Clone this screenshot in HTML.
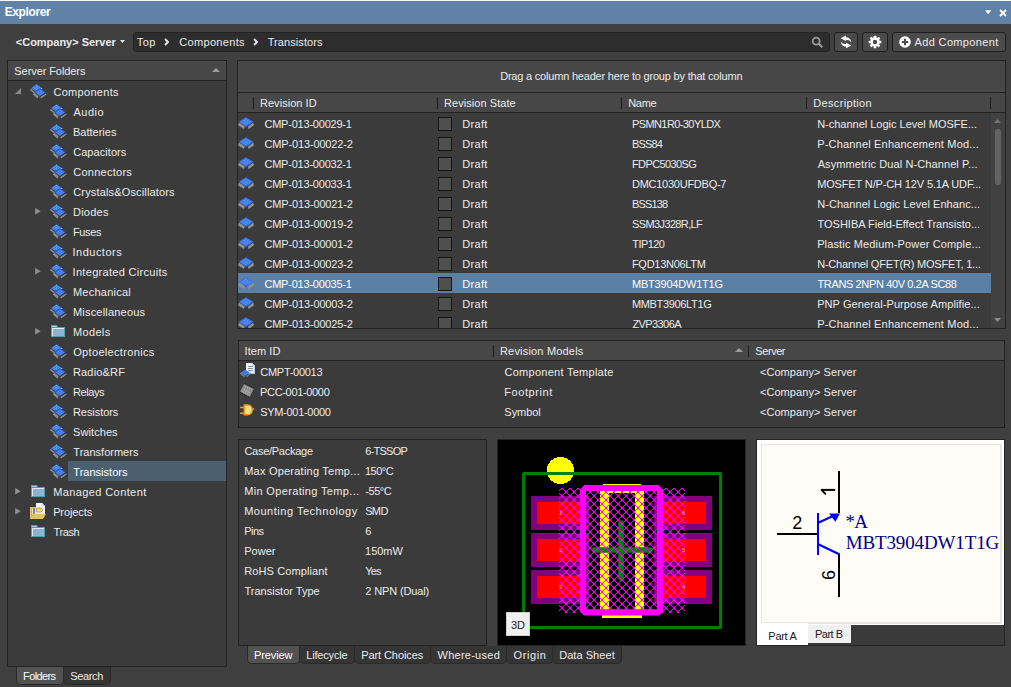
<!DOCTYPE html>
<html><head><meta charset="utf-8"><title>Explorer</title>
<style>
*{box-sizing:border-box;margin:0;padding:0}
html,body{width:1011px;height:687px;overflow:hidden;background:#3f3f3f}
body{font-family:"Liberation Sans",sans-serif;font-size:11px;color:#ebebeb;position:relative}
.abs{position:absolute}
.t{position:absolute;white-space:nowrap;line-height:14px;height:14px}
.panel{position:absolute;border:1px solid #232323;background:#3b3b3b}
.hdr{position:absolute;background:#474747;border-bottom:1px solid #232323}
.btn{position:absolute;border:1px solid #1e1e1e;border-radius:3px;background:#4b4b4b}
.sep{position:absolute;width:1px;background:#1f1f1f}
.cb{position:absolute;width:14px;height:14px;border:1px solid #151515;background:#4f4f4f}
.tab{position:absolute;border:1px solid #2a2a2a;border-top:none;border-radius:0 0 5px 5px;background:#353535}
svg{position:absolute;overflow:visible}
</style></head><body>
<div class="abs" style="left:0;top:0;width:1011px;height:24px;background:#5f82a6"></div>
<div class="t" style="left:4.73px;top:5px;letter-spacing:-0.387px;font-weight:bold;color:#fff;font-size:12px">Explorer</div>
<div class="abs" style="left:0;top:0;width:1011px;height:1px;background:#f4f6f8"></div>
<svg style="left:985px;top:10px" width="6.4" height="4.6" viewBox="0 0 8 5"><path d="M0 0 H8 L4 5Z" fill="#fff"/></svg>
<svg style="left:999px;top:9px" width="8" height="8" viewBox="0 0 8 8"><path d="M1 1 L7 7 M7 1 L1 7" stroke="#fff" stroke-width="1.8"/></svg>
<div class="t" style="left:15.81px;top:35px;letter-spacing:-0.018px;font-weight:bold">&lt;Company&gt; Server</div>
<svg style="left:120px;top:40px" width="5" height="3" viewBox="0 0 5 3"><path d="M0 0 H5 L2.5 3Z" fill="#e4e4e4"/></svg>
<div class="abs" style="left:133px;top:32px;width:697px;height:20px;background:#2d2d2d;border:1px solid #232323;border-radius:3px"></div>
<div class="t" style="left:136.83px;top:35px;letter-spacing:0.353px;">Top</div>
<div class="t" style="left:179.31px;top:35px;letter-spacing:0.319px;">Components</div>
<div class="t" style="left:267.63px;top:35px;letter-spacing:0.087px;">Transistors</div>
<svg style="left:164.2px;top:38px" width="5" height="8" viewBox="0 0 5 8"><path d="M1 1 L4 4 L1 7" stroke="#ececec" stroke-width="1.9" fill="none"/></svg>
<svg style="left:253.4px;top:38px" width="5" height="8" viewBox="0 0 5 8"><path d="M1 1 L4 4 L1 7" stroke="#ececec" stroke-width="1.9" fill="none"/></svg>
<svg style="left:811px;top:36px" width="13" height="13" viewBox="0 0 13 13"><circle cx="5.2" cy="5.2" r="3.5" stroke="#9a9a9a" stroke-width="1.8" fill="none"/><path d="M7.8 7.8 L11.3 11.3" stroke="#9a9a9a" stroke-width="2.2"/></svg>
<div class="btn" style="left:834px;top:32px;width:24px;height:20px"></div>
<div class="btn" style="left:862px;top:32px;width:26px;height:20px"></div>
<div class="btn" style="left:892px;top:32px;width:114px;height:20px"></div>
<svg style="left:0;top:0" width="1011" height="60" viewBox="0 0 1011 60"><g fill="#fff"><path id="rfa" d="M840.7 38.3 L845.9 35.5 V37.2 C849 37.2 851 39.2 851.2 42.3 C850 40.4 848.4 39.7 845.9 39.7 V41.1 Z"/><path d="M840.7 38.3 L845.9 35.5 V37.2 C849 37.2 851 39.2 851.2 42.3 C850 40.4 848.4 39.7 845.9 39.7 V41.1 Z" transform="rotate(180 846 41.9)"/></g></svg>
<svg style="left:868px;top:34.9px" width="14" height="14" viewBox="0 0 14 14"><g fill="#fff"><circle cx="7" cy="7" r="4.7"/><rect x="5.7" y="0.7" width="2.6" height="3" rx="0.5" transform="rotate(0 7 7)"/><rect x="5.7" y="0.7" width="2.6" height="3" rx="0.5" transform="rotate(45 7 7)"/><rect x="5.7" y="0.7" width="2.6" height="3" rx="0.5" transform="rotate(90 7 7)"/><rect x="5.7" y="0.7" width="2.6" height="3" rx="0.5" transform="rotate(135 7 7)"/><rect x="5.7" y="0.7" width="2.6" height="3" rx="0.5" transform="rotate(180 7 7)"/><rect x="5.7" y="0.7" width="2.6" height="3" rx="0.5" transform="rotate(225 7 7)"/><rect x="5.7" y="0.7" width="2.6" height="3" rx="0.5" transform="rotate(270 7 7)"/><rect x="5.7" y="0.7" width="2.6" height="3" rx="0.5" transform="rotate(315 7 7)"/></g><rect x="5" y="5" width="4" height="4" rx="1.2" fill="#4b4b4b"/></svg>
<svg style="left:899px;top:36px" width="12" height="12" viewBox="0 0 12 12"><circle cx="6" cy="6" r="5.8" fill="#fff"/><path d="M6 2.8 V9.2 M2.8 6 H9.2" stroke="#4b4b4b" stroke-width="2"/></svg>
<div class="t" style="left:914.58px;top:35px;letter-spacing:0.349px;">Add Component</div>
<div class="panel" style="left:7px;top:60px;width:220px;height:607px"></div>
<div class="hdr" style="left:8px;top:61px;width:218px;height:20px"></div>
<div class="abs" style="left:8px;top:61px;width:218px;height:1px;background:#515151"></div>
<div class="t" style="left:14.36px;top:64px;letter-spacing:-0.083px;">Server Folders</div>
<svg style="left:212px;top:68px" width="8" height="4" viewBox="0 0 8 4"><path d="M0 4 H8 L4 0Z" fill="#9a9a9a"/></svg>
<svg style="left:15px;top:88px" width="6" height="6" viewBox="0 0 6 6"><path d="M6 0 V6 H0Z" fill="#8a8a8a"/></svg>
<svg style="left:30px;top:84px" width="16" height="16" viewBox="0 0 16 16"><path d="M-0.3 5.9 L0.6 4.9 L4.8 7.9 L4.2 9.5Z" fill="#8e9192"/><path d="M2.8 10.2 L4.4 8.8 L8.4 12.2 L8 14.3 L7.2 14.2Z" fill="#8e9192"/><path d="M10.8 12.8 L16.2 9.2 L16.3 10.8 L11.4 14.3 L10.6 14.1Z" fill="#8e9192"/><path d="M6.4 0.3 L12.4 4.4 L7 8 L0.8 4.4 Z" fill="#4279ec"/><g fill="#62a4fb"><circle cx="6.50" cy="1.40" r="0.6"/><circle cx="5.05" cy="2.35" r="0.6"/><circle cx="3.60" cy="3.30" r="0.6"/><circle cx="7.95" cy="2.35" r="0.6"/><circle cx="6.50" cy="3.30" r="0.6"/><circle cx="5.05" cy="4.25" r="0.6"/><circle cx="9.40" cy="3.30" r="0.6"/><circle cx="7.95" cy="4.25" r="0.6"/><circle cx="6.50" cy="5.20" r="0.6"/></g><path d="M9.8 4.5 L15.3 8.3 L9.6 12.2 L4.6 7.9 Z" fill="#3a6fe6"/><path d="M4.9 7.6 L9.8 4.3 L10.6 4.9 L5.6 8.2Z" fill="#2b58c6"/><g fill="#5496f9"><circle cx="10.10" cy="6.40" r="0.6"/><circle cx="8.60" cy="7.40" r="0.6"/><circle cx="7.10" cy="8.40" r="0.6"/><circle cx="11.60" cy="7.40" r="0.6"/><circle cx="10.10" cy="8.40" r="0.6"/><circle cx="8.60" cy="9.40" r="0.6"/><circle cx="13.10" cy="8.40" r="0.6"/><circle cx="11.60" cy="9.40" r="0.6"/><circle cx="10.10" cy="10.40" r="0.6"/></g><circle cx="11.7" cy="4.4" r="0.6" fill="#b8c8f8"/></svg>
<div class="t" style="left:53.41px;top:85px;letter-spacing:0.308px;">Components</div>
<svg style="left:50px;top:104px" width="16" height="16" viewBox="0 0 16 16"><path d="M-0.3 5.9 L0.6 4.9 L4.8 7.9 L4.2 9.5Z" fill="#8e9192"/><path d="M2.8 10.2 L4.4 8.8 L8.4 12.2 L8 14.3 L7.2 14.2Z" fill="#8e9192"/><path d="M10.8 12.8 L16.2 9.2 L16.3 10.8 L11.4 14.3 L10.6 14.1Z" fill="#8e9192"/><path d="M6.4 0.3 L12.4 4.4 L7 8 L0.8 4.4 Z" fill="#4279ec"/><g fill="#62a4fb"><circle cx="6.50" cy="1.40" r="0.6"/><circle cx="5.05" cy="2.35" r="0.6"/><circle cx="3.60" cy="3.30" r="0.6"/><circle cx="7.95" cy="2.35" r="0.6"/><circle cx="6.50" cy="3.30" r="0.6"/><circle cx="5.05" cy="4.25" r="0.6"/><circle cx="9.40" cy="3.30" r="0.6"/><circle cx="7.95" cy="4.25" r="0.6"/><circle cx="6.50" cy="5.20" r="0.6"/></g><path d="M9.8 4.5 L15.3 8.3 L9.6 12.2 L4.6 7.9 Z" fill="#3a6fe6"/><path d="M4.9 7.6 L9.8 4.3 L10.6 4.9 L5.6 8.2Z" fill="#2b58c6"/><g fill="#5496f9"><circle cx="10.10" cy="6.40" r="0.6"/><circle cx="8.60" cy="7.40" r="0.6"/><circle cx="7.10" cy="8.40" r="0.6"/><circle cx="11.60" cy="7.40" r="0.6"/><circle cx="10.10" cy="8.40" r="0.6"/><circle cx="8.60" cy="9.40" r="0.6"/><circle cx="13.10" cy="8.40" r="0.6"/><circle cx="11.60" cy="9.40" r="0.6"/><circle cx="10.10" cy="10.40" r="0.6"/></g><circle cx="11.7" cy="4.4" r="0.6" fill="#b8c8f8"/></svg>
<div class="t" style="left:73.48px;top:105px;letter-spacing:0.500px;">Audio</div>
<svg style="left:50px;top:124px" width="16" height="16" viewBox="0 0 16 16"><path d="M-0.3 5.9 L0.6 4.9 L4.8 7.9 L4.2 9.5Z" fill="#8e9192"/><path d="M2.8 10.2 L4.4 8.8 L8.4 12.2 L8 14.3 L7.2 14.2Z" fill="#8e9192"/><path d="M10.8 12.8 L16.2 9.2 L16.3 10.8 L11.4 14.3 L10.6 14.1Z" fill="#8e9192"/><path d="M6.4 0.3 L12.4 4.4 L7 8 L0.8 4.4 Z" fill="#4279ec"/><g fill="#62a4fb"><circle cx="6.50" cy="1.40" r="0.6"/><circle cx="5.05" cy="2.35" r="0.6"/><circle cx="3.60" cy="3.30" r="0.6"/><circle cx="7.95" cy="2.35" r="0.6"/><circle cx="6.50" cy="3.30" r="0.6"/><circle cx="5.05" cy="4.25" r="0.6"/><circle cx="9.40" cy="3.30" r="0.6"/><circle cx="7.95" cy="4.25" r="0.6"/><circle cx="6.50" cy="5.20" r="0.6"/></g><path d="M9.8 4.5 L15.3 8.3 L9.6 12.2 L4.6 7.9 Z" fill="#3a6fe6"/><path d="M4.9 7.6 L9.8 4.3 L10.6 4.9 L5.6 8.2Z" fill="#2b58c6"/><g fill="#5496f9"><circle cx="10.10" cy="6.40" r="0.6"/><circle cx="8.60" cy="7.40" r="0.6"/><circle cx="7.10" cy="8.40" r="0.6"/><circle cx="11.60" cy="7.40" r="0.6"/><circle cx="10.10" cy="8.40" r="0.6"/><circle cx="8.60" cy="9.40" r="0.6"/><circle cx="13.10" cy="8.40" r="0.6"/><circle cx="11.60" cy="9.40" r="0.6"/><circle cx="10.10" cy="10.40" r="0.6"/></g><circle cx="11.7" cy="4.4" r="0.6" fill="#b8c8f8"/></svg>
<div class="t" style="left:72.95px;top:125px;letter-spacing:0.007px;">Batteries</div>
<svg style="left:50px;top:144px" width="16" height="16" viewBox="0 0 16 16"><path d="M-0.3 5.9 L0.6 4.9 L4.8 7.9 L4.2 9.5Z" fill="#8e9192"/><path d="M2.8 10.2 L4.4 8.8 L8.4 12.2 L8 14.3 L7.2 14.2Z" fill="#8e9192"/><path d="M10.8 12.8 L16.2 9.2 L16.3 10.8 L11.4 14.3 L10.6 14.1Z" fill="#8e9192"/><path d="M6.4 0.3 L12.4 4.4 L7 8 L0.8 4.4 Z" fill="#4279ec"/><g fill="#62a4fb"><circle cx="6.50" cy="1.40" r="0.6"/><circle cx="5.05" cy="2.35" r="0.6"/><circle cx="3.60" cy="3.30" r="0.6"/><circle cx="7.95" cy="2.35" r="0.6"/><circle cx="6.50" cy="3.30" r="0.6"/><circle cx="5.05" cy="4.25" r="0.6"/><circle cx="9.40" cy="3.30" r="0.6"/><circle cx="7.95" cy="4.25" r="0.6"/><circle cx="6.50" cy="5.20" r="0.6"/></g><path d="M9.8 4.5 L15.3 8.3 L9.6 12.2 L4.6 7.9 Z" fill="#3a6fe6"/><path d="M4.9 7.6 L9.8 4.3 L10.6 4.9 L5.6 8.2Z" fill="#2b58c6"/><g fill="#5496f9"><circle cx="10.10" cy="6.40" r="0.6"/><circle cx="8.60" cy="7.40" r="0.6"/><circle cx="7.10" cy="8.40" r="0.6"/><circle cx="11.60" cy="7.40" r="0.6"/><circle cx="10.10" cy="8.40" r="0.6"/><circle cx="8.60" cy="9.40" r="0.6"/><circle cx="13.10" cy="8.40" r="0.6"/><circle cx="11.60" cy="9.40" r="0.6"/><circle cx="10.10" cy="10.40" r="0.6"/></g><circle cx="11.7" cy="4.4" r="0.6" fill="#b8c8f8"/></svg>
<div class="t" style="left:73.21px;top:145px;letter-spacing:0.055px;">Capacitors</div>
<svg style="left:50px;top:164px" width="16" height="16" viewBox="0 0 16 16"><path d="M-0.3 5.9 L0.6 4.9 L4.8 7.9 L4.2 9.5Z" fill="#8e9192"/><path d="M2.8 10.2 L4.4 8.8 L8.4 12.2 L8 14.3 L7.2 14.2Z" fill="#8e9192"/><path d="M10.8 12.8 L16.2 9.2 L16.3 10.8 L11.4 14.3 L10.6 14.1Z" fill="#8e9192"/><path d="M6.4 0.3 L12.4 4.4 L7 8 L0.8 4.4 Z" fill="#4279ec"/><g fill="#62a4fb"><circle cx="6.50" cy="1.40" r="0.6"/><circle cx="5.05" cy="2.35" r="0.6"/><circle cx="3.60" cy="3.30" r="0.6"/><circle cx="7.95" cy="2.35" r="0.6"/><circle cx="6.50" cy="3.30" r="0.6"/><circle cx="5.05" cy="4.25" r="0.6"/><circle cx="9.40" cy="3.30" r="0.6"/><circle cx="7.95" cy="4.25" r="0.6"/><circle cx="6.50" cy="5.20" r="0.6"/></g><path d="M9.8 4.5 L15.3 8.3 L9.6 12.2 L4.6 7.9 Z" fill="#3a6fe6"/><path d="M4.9 7.6 L9.8 4.3 L10.6 4.9 L5.6 8.2Z" fill="#2b58c6"/><g fill="#5496f9"><circle cx="10.10" cy="6.40" r="0.6"/><circle cx="8.60" cy="7.40" r="0.6"/><circle cx="7.10" cy="8.40" r="0.6"/><circle cx="11.60" cy="7.40" r="0.6"/><circle cx="10.10" cy="8.40" r="0.6"/><circle cx="8.60" cy="9.40" r="0.6"/><circle cx="13.10" cy="8.40" r="0.6"/><circle cx="11.60" cy="9.40" r="0.6"/><circle cx="10.10" cy="10.40" r="0.6"/></g><circle cx="11.7" cy="4.4" r="0.6" fill="#b8c8f8"/></svg>
<div class="t" style="left:73.21px;top:165px;letter-spacing:0.264px;">Connectors</div>
<svg style="left:50px;top:184px" width="16" height="16" viewBox="0 0 16 16"><path d="M-0.3 5.9 L0.6 4.9 L4.8 7.9 L4.2 9.5Z" fill="#8e9192"/><path d="M2.8 10.2 L4.4 8.8 L8.4 12.2 L8 14.3 L7.2 14.2Z" fill="#8e9192"/><path d="M10.8 12.8 L16.2 9.2 L16.3 10.8 L11.4 14.3 L10.6 14.1Z" fill="#8e9192"/><path d="M6.4 0.3 L12.4 4.4 L7 8 L0.8 4.4 Z" fill="#4279ec"/><g fill="#62a4fb"><circle cx="6.50" cy="1.40" r="0.6"/><circle cx="5.05" cy="2.35" r="0.6"/><circle cx="3.60" cy="3.30" r="0.6"/><circle cx="7.95" cy="2.35" r="0.6"/><circle cx="6.50" cy="3.30" r="0.6"/><circle cx="5.05" cy="4.25" r="0.6"/><circle cx="9.40" cy="3.30" r="0.6"/><circle cx="7.95" cy="4.25" r="0.6"/><circle cx="6.50" cy="5.20" r="0.6"/></g><path d="M9.8 4.5 L15.3 8.3 L9.6 12.2 L4.6 7.9 Z" fill="#3a6fe6"/><path d="M4.9 7.6 L9.8 4.3 L10.6 4.9 L5.6 8.2Z" fill="#2b58c6"/><g fill="#5496f9"><circle cx="10.10" cy="6.40" r="0.6"/><circle cx="8.60" cy="7.40" r="0.6"/><circle cx="7.10" cy="8.40" r="0.6"/><circle cx="11.60" cy="7.40" r="0.6"/><circle cx="10.10" cy="8.40" r="0.6"/><circle cx="8.60" cy="9.40" r="0.6"/><circle cx="13.10" cy="8.40" r="0.6"/><circle cx="11.60" cy="9.40" r="0.6"/><circle cx="10.10" cy="10.40" r="0.6"/></g><circle cx="11.7" cy="4.4" r="0.6" fill="#b8c8f8"/></svg>
<div class="t" style="left:73.21px;top:185px;letter-spacing:0.158px;">Crystals&amp;Oscillators</div>
<svg style="left:35px;top:208px" width="6" height="6.6" viewBox="0 0 6 7"><path d="M0 0 L6 3.5 L0 7Z" fill="#8f8f8f"/></svg>
<svg style="left:50px;top:204px" width="16" height="16" viewBox="0 0 16 16"><path d="M-0.3 5.9 L0.6 4.9 L4.8 7.9 L4.2 9.5Z" fill="#8e9192"/><path d="M2.8 10.2 L4.4 8.8 L8.4 12.2 L8 14.3 L7.2 14.2Z" fill="#8e9192"/><path d="M10.8 12.8 L16.2 9.2 L16.3 10.8 L11.4 14.3 L10.6 14.1Z" fill="#8e9192"/><path d="M6.4 0.3 L12.4 4.4 L7 8 L0.8 4.4 Z" fill="#4279ec"/><g fill="#62a4fb"><circle cx="6.50" cy="1.40" r="0.6"/><circle cx="5.05" cy="2.35" r="0.6"/><circle cx="3.60" cy="3.30" r="0.6"/><circle cx="7.95" cy="2.35" r="0.6"/><circle cx="6.50" cy="3.30" r="0.6"/><circle cx="5.05" cy="4.25" r="0.6"/><circle cx="9.40" cy="3.30" r="0.6"/><circle cx="7.95" cy="4.25" r="0.6"/><circle cx="6.50" cy="5.20" r="0.6"/></g><path d="M9.8 4.5 L15.3 8.3 L9.6 12.2 L4.6 7.9 Z" fill="#3a6fe6"/><path d="M4.9 7.6 L9.8 4.3 L10.6 4.9 L5.6 8.2Z" fill="#2b58c6"/><g fill="#5496f9"><circle cx="10.10" cy="6.40" r="0.6"/><circle cx="8.60" cy="7.40" r="0.6"/><circle cx="7.10" cy="8.40" r="0.6"/><circle cx="11.60" cy="7.40" r="0.6"/><circle cx="10.10" cy="8.40" r="0.6"/><circle cx="8.60" cy="9.40" r="0.6"/><circle cx="13.10" cy="8.40" r="0.6"/><circle cx="11.60" cy="9.40" r="0.6"/><circle cx="10.10" cy="10.40" r="0.6"/></g><circle cx="11.7" cy="4.4" r="0.6" fill="#b8c8f8"/></svg>
<div class="t" style="left:72.95px;top:205px;letter-spacing:0.266px;">Diodes</div>
<svg style="left:50px;top:224px" width="16" height="16" viewBox="0 0 16 16"><path d="M-0.3 5.9 L0.6 4.9 L4.8 7.9 L4.2 9.5Z" fill="#8e9192"/><path d="M2.8 10.2 L4.4 8.8 L8.4 12.2 L8 14.3 L7.2 14.2Z" fill="#8e9192"/><path d="M10.8 12.8 L16.2 9.2 L16.3 10.8 L11.4 14.3 L10.6 14.1Z" fill="#8e9192"/><path d="M6.4 0.3 L12.4 4.4 L7 8 L0.8 4.4 Z" fill="#4279ec"/><g fill="#62a4fb"><circle cx="6.50" cy="1.40" r="0.6"/><circle cx="5.05" cy="2.35" r="0.6"/><circle cx="3.60" cy="3.30" r="0.6"/><circle cx="7.95" cy="2.35" r="0.6"/><circle cx="6.50" cy="3.30" r="0.6"/><circle cx="5.05" cy="4.25" r="0.6"/><circle cx="9.40" cy="3.30" r="0.6"/><circle cx="7.95" cy="4.25" r="0.6"/><circle cx="6.50" cy="5.20" r="0.6"/></g><path d="M9.8 4.5 L15.3 8.3 L9.6 12.2 L4.6 7.9 Z" fill="#3a6fe6"/><path d="M4.9 7.6 L9.8 4.3 L10.6 4.9 L5.6 8.2Z" fill="#2b58c6"/><g fill="#5496f9"><circle cx="10.10" cy="6.40" r="0.6"/><circle cx="8.60" cy="7.40" r="0.6"/><circle cx="7.10" cy="8.40" r="0.6"/><circle cx="11.60" cy="7.40" r="0.6"/><circle cx="10.10" cy="8.40" r="0.6"/><circle cx="8.60" cy="9.40" r="0.6"/><circle cx="13.10" cy="8.40" r="0.6"/><circle cx="11.60" cy="9.40" r="0.6"/><circle cx="10.10" cy="10.40" r="0.6"/></g><circle cx="11.7" cy="4.4" r="0.6" fill="#b8c8f8"/></svg>
<div class="t" style="left:72.95px;top:225px;letter-spacing:-0.337px;">Fuses</div>
<svg style="left:50px;top:244px" width="16" height="16" viewBox="0 0 16 16"><path d="M-0.3 5.9 L0.6 4.9 L4.8 7.9 L4.2 9.5Z" fill="#8e9192"/><path d="M2.8 10.2 L4.4 8.8 L8.4 12.2 L8 14.3 L7.2 14.2Z" fill="#8e9192"/><path d="M10.8 12.8 L16.2 9.2 L16.3 10.8 L11.4 14.3 L10.6 14.1Z" fill="#8e9192"/><path d="M6.4 0.3 L12.4 4.4 L7 8 L0.8 4.4 Z" fill="#4279ec"/><g fill="#62a4fb"><circle cx="6.50" cy="1.40" r="0.6"/><circle cx="5.05" cy="2.35" r="0.6"/><circle cx="3.60" cy="3.30" r="0.6"/><circle cx="7.95" cy="2.35" r="0.6"/><circle cx="6.50" cy="3.30" r="0.6"/><circle cx="5.05" cy="4.25" r="0.6"/><circle cx="9.40" cy="3.30" r="0.6"/><circle cx="7.95" cy="4.25" r="0.6"/><circle cx="6.50" cy="5.20" r="0.6"/></g><path d="M9.8 4.5 L15.3 8.3 L9.6 12.2 L4.6 7.9 Z" fill="#3a6fe6"/><path d="M4.9 7.6 L9.8 4.3 L10.6 4.9 L5.6 8.2Z" fill="#2b58c6"/><g fill="#5496f9"><circle cx="10.10" cy="6.40" r="0.6"/><circle cx="8.60" cy="7.40" r="0.6"/><circle cx="7.10" cy="8.40" r="0.6"/><circle cx="11.60" cy="7.40" r="0.6"/><circle cx="10.10" cy="8.40" r="0.6"/><circle cx="8.60" cy="9.40" r="0.6"/><circle cx="13.10" cy="8.40" r="0.6"/><circle cx="11.60" cy="9.40" r="0.6"/><circle cx="10.10" cy="10.40" r="0.6"/></g><circle cx="11.7" cy="4.4" r="0.6" fill="#b8c8f8"/></svg>
<div class="t" style="left:72.55px;top:245px;letter-spacing:0.480px;">Inductors</div>
<svg style="left:35px;top:268px" width="6" height="6.6" viewBox="0 0 6 7"><path d="M0 0 L6 3.5 L0 7Z" fill="#8f8f8f"/></svg>
<svg style="left:50px;top:264px" width="16" height="16" viewBox="0 0 16 16"><path d="M-0.3 5.9 L0.6 4.9 L4.8 7.9 L4.2 9.5Z" fill="#8e9192"/><path d="M2.8 10.2 L4.4 8.8 L8.4 12.2 L8 14.3 L7.2 14.2Z" fill="#8e9192"/><path d="M10.8 12.8 L16.2 9.2 L16.3 10.8 L11.4 14.3 L10.6 14.1Z" fill="#8e9192"/><path d="M6.4 0.3 L12.4 4.4 L7 8 L0.8 4.4 Z" fill="#4279ec"/><g fill="#62a4fb"><circle cx="6.50" cy="1.40" r="0.6"/><circle cx="5.05" cy="2.35" r="0.6"/><circle cx="3.60" cy="3.30" r="0.6"/><circle cx="7.95" cy="2.35" r="0.6"/><circle cx="6.50" cy="3.30" r="0.6"/><circle cx="5.05" cy="4.25" r="0.6"/><circle cx="9.40" cy="3.30" r="0.6"/><circle cx="7.95" cy="4.25" r="0.6"/><circle cx="6.50" cy="5.20" r="0.6"/></g><path d="M9.8 4.5 L15.3 8.3 L9.6 12.2 L4.6 7.9 Z" fill="#3a6fe6"/><path d="M4.9 7.6 L9.8 4.3 L10.6 4.9 L5.6 8.2Z" fill="#2b58c6"/><g fill="#5496f9"><circle cx="10.10" cy="6.40" r="0.6"/><circle cx="8.60" cy="7.40" r="0.6"/><circle cx="7.10" cy="8.40" r="0.6"/><circle cx="11.60" cy="7.40" r="0.6"/><circle cx="10.10" cy="8.40" r="0.6"/><circle cx="8.60" cy="9.40" r="0.6"/><circle cx="13.10" cy="8.40" r="0.6"/><circle cx="11.60" cy="9.40" r="0.6"/><circle cx="10.10" cy="10.40" r="0.6"/></g><circle cx="11.7" cy="4.4" r="0.6" fill="#b8c8f8"/></svg>
<div class="t" style="left:72.55px;top:265px;letter-spacing:0.308px;">Integrated Circuits</div>
<svg style="left:50px;top:284px" width="16" height="16" viewBox="0 0 16 16"><path d="M-0.3 5.9 L0.6 4.9 L4.8 7.9 L4.2 9.5Z" fill="#8e9192"/><path d="M2.8 10.2 L4.4 8.8 L8.4 12.2 L8 14.3 L7.2 14.2Z" fill="#8e9192"/><path d="M10.8 12.8 L16.2 9.2 L16.3 10.8 L11.4 14.3 L10.6 14.1Z" fill="#8e9192"/><path d="M6.4 0.3 L12.4 4.4 L7 8 L0.8 4.4 Z" fill="#4279ec"/><g fill="#62a4fb"><circle cx="6.50" cy="1.40" r="0.6"/><circle cx="5.05" cy="2.35" r="0.6"/><circle cx="3.60" cy="3.30" r="0.6"/><circle cx="7.95" cy="2.35" r="0.6"/><circle cx="6.50" cy="3.30" r="0.6"/><circle cx="5.05" cy="4.25" r="0.6"/><circle cx="9.40" cy="3.30" r="0.6"/><circle cx="7.95" cy="4.25" r="0.6"/><circle cx="6.50" cy="5.20" r="0.6"/></g><path d="M9.8 4.5 L15.3 8.3 L9.6 12.2 L4.6 7.9 Z" fill="#3a6fe6"/><path d="M4.9 7.6 L9.8 4.3 L10.6 4.9 L5.6 8.2Z" fill="#2b58c6"/><g fill="#5496f9"><circle cx="10.10" cy="6.40" r="0.6"/><circle cx="8.60" cy="7.40" r="0.6"/><circle cx="7.10" cy="8.40" r="0.6"/><circle cx="11.60" cy="7.40" r="0.6"/><circle cx="10.10" cy="8.40" r="0.6"/><circle cx="8.60" cy="9.40" r="0.6"/><circle cx="13.10" cy="8.40" r="0.6"/><circle cx="11.60" cy="9.40" r="0.6"/><circle cx="10.10" cy="10.40" r="0.6"/></g><circle cx="11.7" cy="4.4" r="0.6" fill="#b8c8f8"/></svg>
<div class="t" style="left:72.95px;top:285px;letter-spacing:0.246px;">Mechanical</div>
<svg style="left:50px;top:304px" width="16" height="16" viewBox="0 0 16 16"><path d="M-0.3 5.9 L0.6 4.9 L4.8 7.9 L4.2 9.5Z" fill="#8e9192"/><path d="M2.8 10.2 L4.4 8.8 L8.4 12.2 L8 14.3 L7.2 14.2Z" fill="#8e9192"/><path d="M10.8 12.8 L16.2 9.2 L16.3 10.8 L11.4 14.3 L10.6 14.1Z" fill="#8e9192"/><path d="M6.4 0.3 L12.4 4.4 L7 8 L0.8 4.4 Z" fill="#4279ec"/><g fill="#62a4fb"><circle cx="6.50" cy="1.40" r="0.6"/><circle cx="5.05" cy="2.35" r="0.6"/><circle cx="3.60" cy="3.30" r="0.6"/><circle cx="7.95" cy="2.35" r="0.6"/><circle cx="6.50" cy="3.30" r="0.6"/><circle cx="5.05" cy="4.25" r="0.6"/><circle cx="9.40" cy="3.30" r="0.6"/><circle cx="7.95" cy="4.25" r="0.6"/><circle cx="6.50" cy="5.20" r="0.6"/></g><path d="M9.8 4.5 L15.3 8.3 L9.6 12.2 L4.6 7.9 Z" fill="#3a6fe6"/><path d="M4.9 7.6 L9.8 4.3 L10.6 4.9 L5.6 8.2Z" fill="#2b58c6"/><g fill="#5496f9"><circle cx="10.10" cy="6.40" r="0.6"/><circle cx="8.60" cy="7.40" r="0.6"/><circle cx="7.10" cy="8.40" r="0.6"/><circle cx="11.60" cy="7.40" r="0.6"/><circle cx="10.10" cy="8.40" r="0.6"/><circle cx="8.60" cy="9.40" r="0.6"/><circle cx="13.10" cy="8.40" r="0.6"/><circle cx="11.60" cy="9.40" r="0.6"/><circle cx="10.10" cy="10.40" r="0.6"/></g><circle cx="11.7" cy="4.4" r="0.6" fill="#b8c8f8"/></svg>
<div class="t" style="left:72.95px;top:305px;letter-spacing:0.204px;">Miscellaneous</div>
<svg style="left:35px;top:328px" width="6" height="6.6" viewBox="0 0 6 7"><path d="M0 0 L6 3.5 L0 7Z" fill="#8f8f8f"/></svg>
<svg style="left:51px;top:325px" width="14" height="12" viewBox="0 0 14 12"><path d="M0 0 H6 L7 2 H14 V12 H0 Z" fill="#5b9bb0"/><rect x="1" y="3" width="12" height="8" fill="#8db3d4"/><path d="M1 1 H5.5 V2 H1Z" fill="#a9cbe0"/><path d="M1 3 H13 V4 H2 V11 H1Z" fill="#dfeaf2"/></svg>
<div class="t" style="left:72.95px;top:325px;letter-spacing:0.351px;">Models</div>
<svg style="left:50px;top:344px" width="16" height="16" viewBox="0 0 16 16"><path d="M-0.3 5.9 L0.6 4.9 L4.8 7.9 L4.2 9.5Z" fill="#8e9192"/><path d="M2.8 10.2 L4.4 8.8 L8.4 12.2 L8 14.3 L7.2 14.2Z" fill="#8e9192"/><path d="M10.8 12.8 L16.2 9.2 L16.3 10.8 L11.4 14.3 L10.6 14.1Z" fill="#8e9192"/><path d="M6.4 0.3 L12.4 4.4 L7 8 L0.8 4.4 Z" fill="#4279ec"/><g fill="#62a4fb"><circle cx="6.50" cy="1.40" r="0.6"/><circle cx="5.05" cy="2.35" r="0.6"/><circle cx="3.60" cy="3.30" r="0.6"/><circle cx="7.95" cy="2.35" r="0.6"/><circle cx="6.50" cy="3.30" r="0.6"/><circle cx="5.05" cy="4.25" r="0.6"/><circle cx="9.40" cy="3.30" r="0.6"/><circle cx="7.95" cy="4.25" r="0.6"/><circle cx="6.50" cy="5.20" r="0.6"/></g><path d="M9.8 4.5 L15.3 8.3 L9.6 12.2 L4.6 7.9 Z" fill="#3a6fe6"/><path d="M4.9 7.6 L9.8 4.3 L10.6 4.9 L5.6 8.2Z" fill="#2b58c6"/><g fill="#5496f9"><circle cx="10.10" cy="6.40" r="0.6"/><circle cx="8.60" cy="7.40" r="0.6"/><circle cx="7.10" cy="8.40" r="0.6"/><circle cx="11.60" cy="7.40" r="0.6"/><circle cx="10.10" cy="8.40" r="0.6"/><circle cx="8.60" cy="9.40" r="0.6"/><circle cx="13.10" cy="8.40" r="0.6"/><circle cx="11.60" cy="9.40" r="0.6"/><circle cx="10.10" cy="10.40" r="0.6"/></g><circle cx="11.7" cy="4.4" r="0.6" fill="#b8c8f8"/></svg>
<div class="t" style="left:73.24px;top:345px;letter-spacing:0.326px;">Optoelectronics</div>
<svg style="left:50px;top:364px" width="16" height="16" viewBox="0 0 16 16"><path d="M-0.3 5.9 L0.6 4.9 L4.8 7.9 L4.2 9.5Z" fill="#8e9192"/><path d="M2.8 10.2 L4.4 8.8 L8.4 12.2 L8 14.3 L7.2 14.2Z" fill="#8e9192"/><path d="M10.8 12.8 L16.2 9.2 L16.3 10.8 L11.4 14.3 L10.6 14.1Z" fill="#8e9192"/><path d="M6.4 0.3 L12.4 4.4 L7 8 L0.8 4.4 Z" fill="#4279ec"/><g fill="#62a4fb"><circle cx="6.50" cy="1.40" r="0.6"/><circle cx="5.05" cy="2.35" r="0.6"/><circle cx="3.60" cy="3.30" r="0.6"/><circle cx="7.95" cy="2.35" r="0.6"/><circle cx="6.50" cy="3.30" r="0.6"/><circle cx="5.05" cy="4.25" r="0.6"/><circle cx="9.40" cy="3.30" r="0.6"/><circle cx="7.95" cy="4.25" r="0.6"/><circle cx="6.50" cy="5.20" r="0.6"/></g><path d="M9.8 4.5 L15.3 8.3 L9.6 12.2 L4.6 7.9 Z" fill="#3a6fe6"/><path d="M4.9 7.6 L9.8 4.3 L10.6 4.9 L5.6 8.2Z" fill="#2b58c6"/><g fill="#5496f9"><circle cx="10.10" cy="6.40" r="0.6"/><circle cx="8.60" cy="7.40" r="0.6"/><circle cx="7.10" cy="8.40" r="0.6"/><circle cx="11.60" cy="7.40" r="0.6"/><circle cx="10.10" cy="8.40" r="0.6"/><circle cx="8.60" cy="9.40" r="0.6"/><circle cx="13.10" cy="8.40" r="0.6"/><circle cx="11.60" cy="9.40" r="0.6"/><circle cx="10.10" cy="10.40" r="0.6"/></g><circle cx="11.7" cy="4.4" r="0.6" fill="#b8c8f8"/></svg>
<div class="t" style="left:72.95px;top:365px;letter-spacing:0.178px;">Radio&amp;RF</div>
<svg style="left:50px;top:384px" width="16" height="16" viewBox="0 0 16 16"><path d="M-0.3 5.9 L0.6 4.9 L4.8 7.9 L4.2 9.5Z" fill="#8e9192"/><path d="M2.8 10.2 L4.4 8.8 L8.4 12.2 L8 14.3 L7.2 14.2Z" fill="#8e9192"/><path d="M10.8 12.8 L16.2 9.2 L16.3 10.8 L11.4 14.3 L10.6 14.1Z" fill="#8e9192"/><path d="M6.4 0.3 L12.4 4.4 L7 8 L0.8 4.4 Z" fill="#4279ec"/><g fill="#62a4fb"><circle cx="6.50" cy="1.40" r="0.6"/><circle cx="5.05" cy="2.35" r="0.6"/><circle cx="3.60" cy="3.30" r="0.6"/><circle cx="7.95" cy="2.35" r="0.6"/><circle cx="6.50" cy="3.30" r="0.6"/><circle cx="5.05" cy="4.25" r="0.6"/><circle cx="9.40" cy="3.30" r="0.6"/><circle cx="7.95" cy="4.25" r="0.6"/><circle cx="6.50" cy="5.20" r="0.6"/></g><path d="M9.8 4.5 L15.3 8.3 L9.6 12.2 L4.6 7.9 Z" fill="#3a6fe6"/><path d="M4.9 7.6 L9.8 4.3 L10.6 4.9 L5.6 8.2Z" fill="#2b58c6"/><g fill="#5496f9"><circle cx="10.10" cy="6.40" r="0.6"/><circle cx="8.60" cy="7.40" r="0.6"/><circle cx="7.10" cy="8.40" r="0.6"/><circle cx="11.60" cy="7.40" r="0.6"/><circle cx="10.10" cy="8.40" r="0.6"/><circle cx="8.60" cy="9.40" r="0.6"/><circle cx="13.10" cy="8.40" r="0.6"/><circle cx="11.60" cy="9.40" r="0.6"/><circle cx="10.10" cy="10.40" r="0.6"/></g><circle cx="11.7" cy="4.4" r="0.6" fill="#b8c8f8"/></svg>
<div class="t" style="left:72.95px;top:385px;letter-spacing:-0.409px;">Relays</div>
<svg style="left:50px;top:404px" width="16" height="16" viewBox="0 0 16 16"><path d="M-0.3 5.9 L0.6 4.9 L4.8 7.9 L4.2 9.5Z" fill="#8e9192"/><path d="M2.8 10.2 L4.4 8.8 L8.4 12.2 L8 14.3 L7.2 14.2Z" fill="#8e9192"/><path d="M10.8 12.8 L16.2 9.2 L16.3 10.8 L11.4 14.3 L10.6 14.1Z" fill="#8e9192"/><path d="M6.4 0.3 L12.4 4.4 L7 8 L0.8 4.4 Z" fill="#4279ec"/><g fill="#62a4fb"><circle cx="6.50" cy="1.40" r="0.6"/><circle cx="5.05" cy="2.35" r="0.6"/><circle cx="3.60" cy="3.30" r="0.6"/><circle cx="7.95" cy="2.35" r="0.6"/><circle cx="6.50" cy="3.30" r="0.6"/><circle cx="5.05" cy="4.25" r="0.6"/><circle cx="9.40" cy="3.30" r="0.6"/><circle cx="7.95" cy="4.25" r="0.6"/><circle cx="6.50" cy="5.20" r="0.6"/></g><path d="M9.8 4.5 L15.3 8.3 L9.6 12.2 L4.6 7.9 Z" fill="#3a6fe6"/><path d="M4.9 7.6 L9.8 4.3 L10.6 4.9 L5.6 8.2Z" fill="#2b58c6"/><g fill="#5496f9"><circle cx="10.10" cy="6.40" r="0.6"/><circle cx="8.60" cy="7.40" r="0.6"/><circle cx="7.10" cy="8.40" r="0.6"/><circle cx="11.60" cy="7.40" r="0.6"/><circle cx="10.10" cy="8.40" r="0.6"/><circle cx="8.60" cy="9.40" r="0.6"/><circle cx="13.10" cy="8.40" r="0.6"/><circle cx="11.60" cy="9.40" r="0.6"/><circle cx="10.10" cy="10.40" r="0.6"/></g><circle cx="11.7" cy="4.4" r="0.6" fill="#b8c8f8"/></svg>
<div class="t" style="left:72.95px;top:405px;letter-spacing:-0.056px;">Resistors</div>
<svg style="left:50px;top:424px" width="16" height="16" viewBox="0 0 16 16"><path d="M-0.3 5.9 L0.6 4.9 L4.8 7.9 L4.2 9.5Z" fill="#8e9192"/><path d="M2.8 10.2 L4.4 8.8 L8.4 12.2 L8 14.3 L7.2 14.2Z" fill="#8e9192"/><path d="M10.8 12.8 L16.2 9.2 L16.3 10.8 L11.4 14.3 L10.6 14.1Z" fill="#8e9192"/><path d="M6.4 0.3 L12.4 4.4 L7 8 L0.8 4.4 Z" fill="#4279ec"/><g fill="#62a4fb"><circle cx="6.50" cy="1.40" r="0.6"/><circle cx="5.05" cy="2.35" r="0.6"/><circle cx="3.60" cy="3.30" r="0.6"/><circle cx="7.95" cy="2.35" r="0.6"/><circle cx="6.50" cy="3.30" r="0.6"/><circle cx="5.05" cy="4.25" r="0.6"/><circle cx="9.40" cy="3.30" r="0.6"/><circle cx="7.95" cy="4.25" r="0.6"/><circle cx="6.50" cy="5.20" r="0.6"/></g><path d="M9.8 4.5 L15.3 8.3 L9.6 12.2 L4.6 7.9 Z" fill="#3a6fe6"/><path d="M4.9 7.6 L9.8 4.3 L10.6 4.9 L5.6 8.2Z" fill="#2b58c6"/><g fill="#5496f9"><circle cx="10.10" cy="6.40" r="0.6"/><circle cx="8.60" cy="7.40" r="0.6"/><circle cx="7.10" cy="8.40" r="0.6"/><circle cx="11.60" cy="7.40" r="0.6"/><circle cx="10.10" cy="8.40" r="0.6"/><circle cx="8.60" cy="9.40" r="0.6"/><circle cx="13.10" cy="8.40" r="0.6"/><circle cx="11.60" cy="9.40" r="0.6"/><circle cx="10.10" cy="10.40" r="0.6"/></g><circle cx="11.7" cy="4.4" r="0.6" fill="#b8c8f8"/></svg>
<div class="t" style="left:73.06px;top:425px;letter-spacing:0.078px;">Switches</div>
<svg style="left:50px;top:444px" width="16" height="16" viewBox="0 0 16 16"><path d="M-0.3 5.9 L0.6 4.9 L4.8 7.9 L4.2 9.5Z" fill="#8e9192"/><path d="M2.8 10.2 L4.4 8.8 L8.4 12.2 L8 14.3 L7.2 14.2Z" fill="#8e9192"/><path d="M10.8 12.8 L16.2 9.2 L16.3 10.8 L11.4 14.3 L10.6 14.1Z" fill="#8e9192"/><path d="M6.4 0.3 L12.4 4.4 L7 8 L0.8 4.4 Z" fill="#4279ec"/><g fill="#62a4fb"><circle cx="6.50" cy="1.40" r="0.6"/><circle cx="5.05" cy="2.35" r="0.6"/><circle cx="3.60" cy="3.30" r="0.6"/><circle cx="7.95" cy="2.35" r="0.6"/><circle cx="6.50" cy="3.30" r="0.6"/><circle cx="5.05" cy="4.25" r="0.6"/><circle cx="9.40" cy="3.30" r="0.6"/><circle cx="7.95" cy="4.25" r="0.6"/><circle cx="6.50" cy="5.20" r="0.6"/></g><path d="M9.8 4.5 L15.3 8.3 L9.6 12.2 L4.6 7.9 Z" fill="#3a6fe6"/><path d="M4.9 7.6 L9.8 4.3 L10.6 4.9 L5.6 8.2Z" fill="#2b58c6"/><g fill="#5496f9"><circle cx="10.10" cy="6.40" r="0.6"/><circle cx="8.60" cy="7.40" r="0.6"/><circle cx="7.10" cy="8.40" r="0.6"/><circle cx="11.60" cy="7.40" r="0.6"/><circle cx="10.10" cy="8.40" r="0.6"/><circle cx="8.60" cy="9.40" r="0.6"/><circle cx="13.10" cy="8.40" r="0.6"/><circle cx="11.60" cy="9.40" r="0.6"/><circle cx="10.10" cy="10.40" r="0.6"/></g><circle cx="11.7" cy="4.4" r="0.6" fill="#b8c8f8"/></svg>
<div class="t" style="left:73.33px;top:445px;letter-spacing:0.007px;">Transformers</div>
<div class="abs" style="left:68px;top:461px;width:158px;height:20px;background:#4c5f70"></div>
<svg style="left:50px;top:464px" width="16" height="16" viewBox="0 0 16 16"><path d="M-0.3 5.9 L0.6 4.9 L4.8 7.9 L4.2 9.5Z" fill="#8e9192"/><path d="M2.8 10.2 L4.4 8.8 L8.4 12.2 L8 14.3 L7.2 14.2Z" fill="#8e9192"/><path d="M10.8 12.8 L16.2 9.2 L16.3 10.8 L11.4 14.3 L10.6 14.1Z" fill="#8e9192"/><path d="M6.4 0.3 L12.4 4.4 L7 8 L0.8 4.4 Z" fill="#4279ec"/><g fill="#62a4fb"><circle cx="6.50" cy="1.40" r="0.6"/><circle cx="5.05" cy="2.35" r="0.6"/><circle cx="3.60" cy="3.30" r="0.6"/><circle cx="7.95" cy="2.35" r="0.6"/><circle cx="6.50" cy="3.30" r="0.6"/><circle cx="5.05" cy="4.25" r="0.6"/><circle cx="9.40" cy="3.30" r="0.6"/><circle cx="7.95" cy="4.25" r="0.6"/><circle cx="6.50" cy="5.20" r="0.6"/></g><path d="M9.8 4.5 L15.3 8.3 L9.6 12.2 L4.6 7.9 Z" fill="#3a6fe6"/><path d="M4.9 7.6 L9.8 4.3 L10.6 4.9 L5.6 8.2Z" fill="#2b58c6"/><g fill="#5496f9"><circle cx="10.10" cy="6.40" r="0.6"/><circle cx="8.60" cy="7.40" r="0.6"/><circle cx="7.10" cy="8.40" r="0.6"/><circle cx="11.60" cy="7.40" r="0.6"/><circle cx="10.10" cy="8.40" r="0.6"/><circle cx="8.60" cy="9.40" r="0.6"/><circle cx="13.10" cy="8.40" r="0.6"/><circle cx="11.60" cy="9.40" r="0.6"/><circle cx="10.10" cy="10.40" r="0.6"/></g><circle cx="11.7" cy="4.4" r="0.6" fill="#b8c8f8"/></svg>
<div class="t" style="left:73.33px;top:465px;letter-spacing:0.017px;color:#fff">Transistors</div>
<svg style="left:15px;top:488px" width="6" height="6.6" viewBox="0 0 6 7"><path d="M0 0 L6 3.5 L0 7Z" fill="#8f8f8f"/></svg>
<svg style="left:31px;top:485px" width="14" height="12" viewBox="0 0 14 12"><path d="M0 0 H6 L7 2 H14 V12 H0 Z" fill="#5b9bb0"/><rect x="1" y="3" width="12" height="8" fill="#8db3d4"/><path d="M1 1 H5.5 V2 H1Z" fill="#a9cbe0"/><path d="M1 3 H13 V4 H2 V11 H1Z" fill="#dfeaf2"/></svg>
<div class="t" style="left:53.15px;top:485px;letter-spacing:0.401px;">Managed Content</div>
<svg style="left:15px;top:508px" width="6" height="6.6" viewBox="0 0 6 7"><path d="M0 0 L6 3.5 L0 7Z" fill="#8f8f8f"/></svg>
<svg style="left:30px;top:503px" width="16" height="16" viewBox="0 0 16 16"><path d="M6 0 H12 L15 3 V11 H6Z" fill="#f4f6f8"/><path d="M12 0 L15 3 H12Z" fill="#c9d2da"/><path d="M0 4 H6 V6 H1.5 V13 L4 11 H16 L13 16 H0Z" fill="#e3c070"/><path d="M1.5 6 H6 V11 H4 L1.5 13Z" fill="#f6e3a6"/><path d="M6.5 5 H11 L13 7 L11 9 H6.5Z" fill="#f0d68a" stroke="#b89848" stroke-width="0.8"/><path d="M3 6 H5 M3 8 H5 M3 10 H5 M4 6 V10" stroke="#2a6ae0" stroke-width="1" fill="none"/></svg>
<div class="t" style="left:53.15px;top:505px;letter-spacing:-0.107px;">Projects</div>
<svg style="left:31px;top:525px" width="14" height="12" viewBox="0 0 14 12"><path d="M0 0 H6 L7 2 H14 V12 H0 Z" fill="#5b9bb0"/><rect x="1" y="3" width="12" height="8" fill="#8db3d4"/><path d="M1 1 H5.5 V2 H1Z" fill="#a9cbe0"/><path d="M1 3 H13 V4 H2 V11 H1Z" fill="#dfeaf2"/></svg>
<div class="t" style="left:53.53px;top:525px;letter-spacing:-0.390px;">Trash</div>
<div class="tab" style="left:16px;top:667px;width:48px;height:18px;background:#525252"></div>
<div class="tab" style="left:63px;top:667px;width:48px;height:18px"></div>
<div class="t" style="left:23.05px;top:669px;letter-spacing:-0.625px;color:#fff;font-size:11px">Folders</div>
<div class="t" style="left:70.16px;top:669px;letter-spacing:-0.352px;font-size:11px">Search</div>
<div class="panel" style="left:237px;top:60px;width:769px;height:269px"></div>
<div class="hdr" style="left:238px;top:61px;width:767px;height:32px"></div>
<div class="t" style="left:500.15px;top:69px;letter-spacing:-0.199px;font-size:11px">Drag a column header here to group by that column</div>
<div class="hdr" style="left:238px;top:93px;width:767px;height:20px"></div>
<div class="sep" style="left:253px;top:97px;height:12px"></div>
<div class="sep" style="left:437px;top:97px;height:12px"></div>
<div class="sep" style="left:621px;top:97px;height:12px"></div>
<div class="sep" style="left:806px;top:97px;height:12px"></div>
<div class="sep" style="left:990px;top:97px;height:12px"></div>
<div class="t" style="left:259.95px;top:96px;letter-spacing:0.047px;">Revision ID</div>
<div class="t" style="left:444.05px;top:96px;letter-spacing:0.055px;">Revision State</div>
<div class="t" style="left:628.15px;top:96px;letter-spacing:-0.285px;">Name</div>
<div class="t" style="left:813.25px;top:96px;letter-spacing:0.337px;">Description</div>
<div class="abs" style="left:0;top:0;width:1004px;height:328px;overflow:hidden">
<svg style="left:238px;top:116px" width="16" height="16" viewBox="0 0 16 16"><path d="M0 9.2 L1.2 6.6 L6.8 10.4 L5.9 13.1Z" fill="#8e9192"/><path d="M9.8 10.7 L15.2 6.6 L16.1 9.2 L10.5 13.1Z" fill="#8e9192"/><path d="M7.9 1.3 L15.3 5.7 L7.9 10.9 L0.8 5.7 Z" fill="#3c76ea"/><path d="M6.9 10.1 L7.9 10.9 L8.9 10.1 L7.9 9.5Z" fill="#2a4cc4"/><g fill="#56a0fb"><circle cx="7.90" cy="3.60" r="0.75"/><circle cx="6.05" cy="4.75" r="0.75"/><circle cx="4.20" cy="5.90" r="0.75"/><circle cx="9.75" cy="4.75" r="0.75"/><circle cx="7.90" cy="5.90" r="0.75"/><circle cx="6.05" cy="7.05" r="0.75"/><circle cx="11.60" cy="5.90" r="0.75"/><circle cx="9.75" cy="7.05" r="0.75"/><circle cx="7.90" cy="8.20" r="0.75"/></g></svg>
<div class="t" style="left:264.41px;top:117px;letter-spacing:-0.211px;">CMP-013-00029-1</div>
<div class="cb" style="left:438px;top:117px"></div>
<div class="t" style="left:462.15px;top:117px;letter-spacing:0.361px;">Draft</div>
<div class="t" style="left:631.95px;top:117px;letter-spacing:-0.590px;">PSMN1R0-30YLDX</div>
<div class="t" style="left:817.15px;top:117px;letter-spacing:-0.009px;">N-channel Logic Level MOSFE...</div>
<svg style="left:238px;top:136px" width="16" height="16" viewBox="0 0 16 16"><path d="M0 9.2 L1.2 6.6 L6.8 10.4 L5.9 13.1Z" fill="#8e9192"/><path d="M9.8 10.7 L15.2 6.6 L16.1 9.2 L10.5 13.1Z" fill="#8e9192"/><path d="M7.9 1.3 L15.3 5.7 L7.9 10.9 L0.8 5.7 Z" fill="#3c76ea"/><path d="M6.9 10.1 L7.9 10.9 L8.9 10.1 L7.9 9.5Z" fill="#2a4cc4"/><g fill="#56a0fb"><circle cx="7.90" cy="3.60" r="0.75"/><circle cx="6.05" cy="4.75" r="0.75"/><circle cx="4.20" cy="5.90" r="0.75"/><circle cx="9.75" cy="4.75" r="0.75"/><circle cx="7.90" cy="5.90" r="0.75"/><circle cx="6.05" cy="7.05" r="0.75"/><circle cx="11.60" cy="5.90" r="0.75"/><circle cx="9.75" cy="7.05" r="0.75"/><circle cx="7.90" cy="8.20" r="0.75"/></g></svg>
<div class="t" style="left:264.41px;top:137px;letter-spacing:-0.141px;">CMP-013-00022-2</div>
<div class="cb" style="left:438px;top:137px"></div>
<div class="t" style="left:462.15px;top:137px;letter-spacing:0.361px;">Draft</div>
<div class="t" style="left:631.95px;top:137px;letter-spacing:-0.850px;">BSS84</div>
<div class="t" style="left:817.15px;top:137px;letter-spacing:0.190px;">P-Channel Enhancement Mod...</div>
<svg style="left:238px;top:156px" width="16" height="16" viewBox="0 0 16 16"><path d="M0 9.2 L1.2 6.6 L6.8 10.4 L5.9 13.1Z" fill="#8e9192"/><path d="M9.8 10.7 L15.2 6.6 L16.1 9.2 L10.5 13.1Z" fill="#8e9192"/><path d="M7.9 1.3 L15.3 5.7 L7.9 10.9 L0.8 5.7 Z" fill="#3c76ea"/><path d="M6.9 10.1 L7.9 10.9 L8.9 10.1 L7.9 9.5Z" fill="#2a4cc4"/><g fill="#56a0fb"><circle cx="7.90" cy="3.60" r="0.75"/><circle cx="6.05" cy="4.75" r="0.75"/><circle cx="4.20" cy="5.90" r="0.75"/><circle cx="9.75" cy="4.75" r="0.75"/><circle cx="7.90" cy="5.90" r="0.75"/><circle cx="6.05" cy="7.05" r="0.75"/><circle cx="11.60" cy="5.90" r="0.75"/><circle cx="9.75" cy="7.05" r="0.75"/><circle cx="7.90" cy="8.20" r="0.75"/></g></svg>
<div class="t" style="left:264.41px;top:157px;letter-spacing:-0.211px;">CMP-013-00032-1</div>
<div class="cb" style="left:438px;top:157px"></div>
<div class="t" style="left:462.15px;top:157px;letter-spacing:0.361px;">Draft</div>
<div class="t" style="left:631.95px;top:157px;letter-spacing:-0.593px;">FDPC5030SG</div>
<div class="t" style="left:817.68px;top:157px;letter-spacing:0.099px;">Asymmetric Dual N-Channel P...</div>
<svg style="left:238px;top:176px" width="16" height="16" viewBox="0 0 16 16"><path d="M0 9.2 L1.2 6.6 L6.8 10.4 L5.9 13.1Z" fill="#8e9192"/><path d="M9.8 10.7 L15.2 6.6 L16.1 9.2 L10.5 13.1Z" fill="#8e9192"/><path d="M7.9 1.3 L15.3 5.7 L7.9 10.9 L0.8 5.7 Z" fill="#3c76ea"/><path d="M6.9 10.1 L7.9 10.9 L8.9 10.1 L7.9 9.5Z" fill="#2a4cc4"/><g fill="#56a0fb"><circle cx="7.90" cy="3.60" r="0.75"/><circle cx="6.05" cy="4.75" r="0.75"/><circle cx="4.20" cy="5.90" r="0.75"/><circle cx="9.75" cy="4.75" r="0.75"/><circle cx="7.90" cy="5.90" r="0.75"/><circle cx="6.05" cy="7.05" r="0.75"/><circle cx="11.60" cy="5.90" r="0.75"/><circle cx="9.75" cy="7.05" r="0.75"/><circle cx="7.90" cy="8.20" r="0.75"/></g></svg>
<div class="t" style="left:264.41px;top:177px;letter-spacing:-0.211px;">CMP-013-00033-1</div>
<div class="cb" style="left:438px;top:177px"></div>
<div class="t" style="left:462.15px;top:177px;letter-spacing:0.361px;">Draft</div>
<div class="t" style="left:631.95px;top:177px;letter-spacing:-0.250px;">DMC1030UFDBQ-7</div>
<div class="t" style="left:817.15px;top:177px;letter-spacing:-0.139px;">MOSFET N/P-CH 12V 5.1A UDF...</div>
<svg style="left:238px;top:196px" width="16" height="16" viewBox="0 0 16 16"><path d="M0 9.2 L1.2 6.6 L6.8 10.4 L5.9 13.1Z" fill="#8e9192"/><path d="M9.8 10.7 L15.2 6.6 L16.1 9.2 L10.5 13.1Z" fill="#8e9192"/><path d="M7.9 1.3 L15.3 5.7 L7.9 10.9 L0.8 5.7 Z" fill="#3c76ea"/><path d="M6.9 10.1 L7.9 10.9 L8.9 10.1 L7.9 9.5Z" fill="#2a4cc4"/><g fill="#56a0fb"><circle cx="7.90" cy="3.60" r="0.75"/><circle cx="6.05" cy="4.75" r="0.75"/><circle cx="4.20" cy="5.90" r="0.75"/><circle cx="9.75" cy="4.75" r="0.75"/><circle cx="7.90" cy="5.90" r="0.75"/><circle cx="6.05" cy="7.05" r="0.75"/><circle cx="11.60" cy="5.90" r="0.75"/><circle cx="9.75" cy="7.05" r="0.75"/><circle cx="7.90" cy="8.20" r="0.75"/></g></svg>
<div class="t" style="left:264.41px;top:197px;letter-spacing:-0.141px;">CMP-013-00021-2</div>
<div class="cb" style="left:438px;top:197px"></div>
<div class="t" style="left:462.15px;top:197px;letter-spacing:0.361px;">Draft</div>
<div class="t" style="left:631.95px;top:197px;letter-spacing:-0.838px;">BSS138</div>
<div class="t" style="left:817.15px;top:197px;letter-spacing:0.070px;">N-Channel Logic Level Enhanc...</div>
<svg style="left:238px;top:216px" width="16" height="16" viewBox="0 0 16 16"><path d="M0 9.2 L1.2 6.6 L6.8 10.4 L5.9 13.1Z" fill="#8e9192"/><path d="M9.8 10.7 L15.2 6.6 L16.1 9.2 L10.5 13.1Z" fill="#8e9192"/><path d="M7.9 1.3 L15.3 5.7 L7.9 10.9 L0.8 5.7 Z" fill="#3c76ea"/><path d="M6.9 10.1 L7.9 10.9 L8.9 10.1 L7.9 9.5Z" fill="#2a4cc4"/><g fill="#56a0fb"><circle cx="7.90" cy="3.60" r="0.75"/><circle cx="6.05" cy="4.75" r="0.75"/><circle cx="4.20" cy="5.90" r="0.75"/><circle cx="9.75" cy="4.75" r="0.75"/><circle cx="7.90" cy="5.90" r="0.75"/><circle cx="6.05" cy="7.05" r="0.75"/><circle cx="11.60" cy="5.90" r="0.75"/><circle cx="9.75" cy="7.05" r="0.75"/><circle cx="7.90" cy="8.20" r="0.75"/></g></svg>
<div class="t" style="left:264.41px;top:217px;letter-spacing:-0.141px;">CMP-013-00019-2</div>
<div class="cb" style="left:438px;top:217px"></div>
<div class="t" style="left:462.15px;top:217px;letter-spacing:0.361px;">Draft</div>
<div class="t" style="left:632.06px;top:217px;letter-spacing:-0.624px;">SSM3J328R,LF</div>
<div class="t" style="left:817.53px;top:217px;letter-spacing:-0.009px;">TOSHIBA Field-Effect Transisto...</div>
<svg style="left:238px;top:236px" width="16" height="16" viewBox="0 0 16 16"><path d="M0 9.2 L1.2 6.6 L6.8 10.4 L5.9 13.1Z" fill="#8e9192"/><path d="M9.8 10.7 L15.2 6.6 L16.1 9.2 L10.5 13.1Z" fill="#8e9192"/><path d="M7.9 1.3 L15.3 5.7 L7.9 10.9 L0.8 5.7 Z" fill="#3c76ea"/><path d="M6.9 10.1 L7.9 10.9 L8.9 10.1 L7.9 9.5Z" fill="#2a4cc4"/><g fill="#56a0fb"><circle cx="7.90" cy="3.60" r="0.75"/><circle cx="6.05" cy="4.75" r="0.75"/><circle cx="4.20" cy="5.90" r="0.75"/><circle cx="9.75" cy="4.75" r="0.75"/><circle cx="7.90" cy="5.90" r="0.75"/><circle cx="6.05" cy="7.05" r="0.75"/><circle cx="11.60" cy="5.90" r="0.75"/><circle cx="9.75" cy="7.05" r="0.75"/><circle cx="7.90" cy="8.20" r="0.75"/></g></svg>
<div class="t" style="left:264.41px;top:237px;letter-spacing:-0.141px;">CMP-013-00001-2</div>
<div class="cb" style="left:438px;top:237px"></div>
<div class="t" style="left:462.15px;top:237px;letter-spacing:0.361px;">Draft</div>
<div class="t" style="left:632.33px;top:237px;letter-spacing:-0.570px;">TIP120</div>
<div class="t" style="left:817.15px;top:237px;letter-spacing:0.146px;">Plastic Medium-Power Comple...</div>
<svg style="left:238px;top:256px" width="16" height="16" viewBox="0 0 16 16"><path d="M0 9.2 L1.2 6.6 L6.8 10.4 L5.9 13.1Z" fill="#8e9192"/><path d="M9.8 10.7 L15.2 6.6 L16.1 9.2 L10.5 13.1Z" fill="#8e9192"/><path d="M7.9 1.3 L15.3 5.7 L7.9 10.9 L0.8 5.7 Z" fill="#3c76ea"/><path d="M6.9 10.1 L7.9 10.9 L8.9 10.1 L7.9 9.5Z" fill="#2a4cc4"/><g fill="#56a0fb"><circle cx="7.90" cy="3.60" r="0.75"/><circle cx="6.05" cy="4.75" r="0.75"/><circle cx="4.20" cy="5.90" r="0.75"/><circle cx="9.75" cy="4.75" r="0.75"/><circle cx="7.90" cy="5.90" r="0.75"/><circle cx="6.05" cy="7.05" r="0.75"/><circle cx="11.60" cy="5.90" r="0.75"/><circle cx="9.75" cy="7.05" r="0.75"/><circle cx="7.90" cy="8.20" r="0.75"/></g></svg>
<div class="t" style="left:264.41px;top:257px;letter-spacing:-0.141px;">CMP-013-00023-2</div>
<div class="cb" style="left:438px;top:257px"></div>
<div class="t" style="left:462.15px;top:257px;letter-spacing:0.361px;">Draft</div>
<div class="t" style="left:631.95px;top:257px;letter-spacing:-0.283px;">FQD13N06LTM</div>
<div class="t" style="left:817.15px;top:257px;letter-spacing:-0.191px;">N-Channel QFET(R) MOSFET, 1...</div>
<div class="abs" style="left:238px;top:273px;width:753px;height:20px;background:#5c80a4"></div>
<svg style="left:238px;top:276px" width="16" height="16" viewBox="0 0 16 16"><path d="M0 9.2 L1.2 6.6 L6.8 10.4 L5.9 13.1Z" fill="#8e9192"/><path d="M9.8 10.7 L15.2 6.6 L16.1 9.2 L10.5 13.1Z" fill="#8e9192"/><path d="M7.9 1.3 L15.3 5.7 L7.9 10.9 L0.8 5.7 Z" fill="#3c76ea"/><path d="M6.9 10.1 L7.9 10.9 L8.9 10.1 L7.9 9.5Z" fill="#2a4cc4"/><g fill="#56a0fb"><circle cx="7.90" cy="3.60" r="0.75"/><circle cx="6.05" cy="4.75" r="0.75"/><circle cx="4.20" cy="5.90" r="0.75"/><circle cx="9.75" cy="4.75" r="0.75"/><circle cx="7.90" cy="5.90" r="0.75"/><circle cx="6.05" cy="7.05" r="0.75"/><circle cx="11.60" cy="5.90" r="0.75"/><circle cx="9.75" cy="7.05" r="0.75"/><circle cx="7.90" cy="8.20" r="0.75"/></g></svg>
<div class="t" style="left:264.41px;top:277px;letter-spacing:-0.211px;color:#fff">CMP-013-00035-1</div>
<div class="cb" style="left:438px;top:277px"></div>
<div class="t" style="left:462.15px;top:277px;letter-spacing:0.361px;color:#fff">Draft</div>
<div class="t" style="left:631.95px;top:277px;letter-spacing:-0.202px;color:#fff">MBT3904DW1T1G</div>
<div class="t" style="left:817.53px;top:277px;letter-spacing:-0.373px;color:#fff">TRANS 2NPN 40V 0.2A SC88</div>
<svg style="left:238px;top:296px" width="16" height="16" viewBox="0 0 16 16"><path d="M0 9.2 L1.2 6.6 L6.8 10.4 L5.9 13.1Z" fill="#8e9192"/><path d="M9.8 10.7 L15.2 6.6 L16.1 9.2 L10.5 13.1Z" fill="#8e9192"/><path d="M7.9 1.3 L15.3 5.7 L7.9 10.9 L0.8 5.7 Z" fill="#3c76ea"/><path d="M6.9 10.1 L7.9 10.9 L8.9 10.1 L7.9 9.5Z" fill="#2a4cc4"/><g fill="#56a0fb"><circle cx="7.90" cy="3.60" r="0.75"/><circle cx="6.05" cy="4.75" r="0.75"/><circle cx="4.20" cy="5.90" r="0.75"/><circle cx="9.75" cy="4.75" r="0.75"/><circle cx="7.90" cy="5.90" r="0.75"/><circle cx="6.05" cy="7.05" r="0.75"/><circle cx="11.60" cy="5.90" r="0.75"/><circle cx="9.75" cy="7.05" r="0.75"/><circle cx="7.90" cy="8.20" r="0.75"/></g></svg>
<div class="t" style="left:264.41px;top:297px;letter-spacing:-0.141px;">CMP-013-00003-2</div>
<div class="cb" style="left:438px;top:297px"></div>
<div class="t" style="left:462.15px;top:297px;letter-spacing:0.361px;">Draft</div>
<div class="t" style="left:631.95px;top:297px;letter-spacing:-0.339px;">MMBT3906LT1G</div>
<div class="t" style="left:817.15px;top:297px;letter-spacing:0.088px;">PNP General-Purpose Amplifie...</div>
<svg style="left:238px;top:316px" width="16" height="16" viewBox="0 0 16 16"><path d="M0 9.2 L1.2 6.6 L6.8 10.4 L5.9 13.1Z" fill="#8e9192"/><path d="M9.8 10.7 L15.2 6.6 L16.1 9.2 L10.5 13.1Z" fill="#8e9192"/><path d="M7.9 1.3 L15.3 5.7 L7.9 10.9 L0.8 5.7 Z" fill="#3c76ea"/><path d="M6.9 10.1 L7.9 10.9 L8.9 10.1 L7.9 9.5Z" fill="#2a4cc4"/><g fill="#56a0fb"><circle cx="7.90" cy="3.60" r="0.75"/><circle cx="6.05" cy="4.75" r="0.75"/><circle cx="4.20" cy="5.90" r="0.75"/><circle cx="9.75" cy="4.75" r="0.75"/><circle cx="7.90" cy="5.90" r="0.75"/><circle cx="6.05" cy="7.05" r="0.75"/><circle cx="11.60" cy="5.90" r="0.75"/><circle cx="9.75" cy="7.05" r="0.75"/><circle cx="7.90" cy="8.20" r="0.75"/></g></svg>
<div class="t" style="left:264.41px;top:317px;letter-spacing:-0.141px;">CMP-013-00025-2</div>
<div class="cb" style="left:438px;top:317px"></div>
<div class="t" style="left:462.15px;top:317px;letter-spacing:0.361px;">Draft</div>
<div class="t" style="left:632.39px;top:317px;letter-spacing:-0.580px;">ZVP3306A</div>
<div class="t" style="left:817.15px;top:317px;letter-spacing:0.190px;">P-Channel Enhancement Mod...</div>
</div>
<div class="abs" style="left:991px;top:113px;width:14px;height:215px;background:#414141"></div>
<svg style="left:994px;top:119px" width="7" height="4" viewBox="0 0 7 4"><path d="M0 4 H7 L3.5 0Z" fill="#767676"/></svg>
<div class="abs" style="left:995px;top:129px;width:6px;height:56px;background:#636363;border-radius:3px"></div>
<svg style="left:994px;top:318px" width="7" height="4" viewBox="0 0 7 4"><path d="M0 0 H7 L3.5 4Z" fill="#8c8c8c"/></svg>
<div class="panel" style="left:238px;top:340px;width:767px;height:88px"></div>
<div class="hdr" style="left:239px;top:341px;width:765px;height:20px"></div>
<div class="sep" style="left:493px;top:345px;height:12px"></div>
<div class="sep" style="left:748px;top:345px;height:12px"></div>
<div class="t" style="left:244.55px;top:344px;letter-spacing:0.057px;">Item ID</div>
<div class="t" style="left:499.95px;top:344px;letter-spacing:0.189px;">Revision Models</div>
<div class="t" style="left:755.36px;top:344px;letter-spacing:-0.444px;">Server</div>
<svg style="left:735px;top:348px" width="8" height="4" viewBox="0 0 8 4"><path d="M0 4 H8 L4 0Z" fill="#9a9a9a"/></svg>
<div class="t" style="left:260.31px;top:365px;letter-spacing:-0.284px;">CMPT-00013</div>
<div class="t" style="left:504.51px;top:365px;letter-spacing:0.270px;">Component Template</div>
<div class="t" style="left:759.94px;top:365px;letter-spacing:0.066px;">&lt;Company&gt; Server</div>
<div class="t" style="left:260.05px;top:385px;letter-spacing:-0.334px;">PCC-001-0000</div>
<div class="t" style="left:504.25px;top:385px;letter-spacing:0.586px;">Footprint</div>
<div class="t" style="left:759.94px;top:385px;letter-spacing:0.066px;">&lt;Company&gt; Server</div>
<div class="t" style="left:260.16px;top:405px;letter-spacing:-0.294px;">SYM-001-0000</div>
<div class="t" style="left:504.36px;top:405px;letter-spacing:-0.059px;">Symbol</div>
<div class="t" style="left:759.94px;top:405px;letter-spacing:0.066px;">&lt;Company&gt; Server</div>
<svg style="left:0;top:0" width="1011" height="687" viewBox="0 0 1011 687"><path d="M246 363 H252.2 L255 365.8 V373.7 H246Z" fill="#eef3fa"/><path d="M252.2 363 L255 365.8 H252.2Z" fill="#b8c8dc"/><path d="M254.4 366 V373.4" stroke="#b4c4d8" stroke-width="1"/><path d="M248.1 366.5 H252.9 M248.1 368.5 H252.9 M248.1 370.6 H252.9" stroke="#6a8098" stroke-width="0.9"/><path d="M239.9 373.4 L244.6 377.6 L244.6 376 L240.6 372.6Z M251.2 373 L246.6 377.6 L246.6 376 L250.4 372.4Z" fill="#8a8d8f"/><path d="M245.3 369.7 L250 372.8 L245.3 376 L240.7 372.8Z" fill="#3f7cf0"/><path d="M244.1 384.1 L253.8 388.7 L249.7 396.9 L240.1 391.6Z" fill="#8c8c8c"/><path d="M245 386.6 L251.6 389.8 M243.6 389.4 L250.2 392.8 M242.6 391.6 L248.8 394.8" stroke="#bdbdbd" stroke-width="1.1" stroke-dasharray="1.2 1"/><path d="M244.6 383.6 L254.2 388.2" stroke="#1c1c1c" stroke-width="1.3" stroke-dasharray="1 1.3"/><path d="M239.8 392.2 L249.4 397.4" stroke="#1c1c1c" stroke-width="1.3" stroke-dasharray="1 1.3"/><path d="M240 407.4 H244 M240 413.2 H244 M252 408.9 H254.2" stroke="#f09a2a" stroke-width="1.5"/><path d="M244.3 405 H247.6 C250.6 405 252.2 407.4 252.2 409.9 C252.2 412.4 250.6 414.8 247.6 414.8 H244.3Z" fill="#efe27c" stroke="#f09426" stroke-width="1.5"/></svg>
<div class="panel" style="left:238px;top:439px;width:249px;height:207px"></div>
<div class="t" style="left:244.41px;top:444px;letter-spacing:-0.268px;">Case/Package</div>
<div class="t" style="left:365.31px;top:444px;letter-spacing:-0.760px;">6-TSSOP</div>
<div class="t" style="left:244.15px;top:464px;letter-spacing:0.227px;">Max Operating Temp...</div>
<div class="t" style="left:365.04px;top:464px;letter-spacing:-0.531px;">150°C</div>
<div class="t" style="left:244.15px;top:484px;letter-spacing:0.352px;">Min Operating Temp...</div>
<div class="t" style="left:365.32px;top:484px;letter-spacing:-0.451px;">-55°C</div>
<div class="t" style="left:244.15px;top:504px;letter-spacing:0.520px;">Mounting Technology</div>
<div class="t" style="left:365.16px;top:504px;letter-spacing:-0.637px;">SMD</div>
<div class="t" style="left:244.15px;top:524px;letter-spacing:-0.516px;">Pins</div>
<div class="t" style="left:365.31px;top:524px;letter-spacing:0.000px;">6</div>
<div class="t" style="left:244.15px;top:544px;letter-spacing:0.032px;">Power</div>
<div class="t" style="left:365.04px;top:544px;letter-spacing:-0.011px;">150mW</div>
<div class="t" style="left:244.15px;top:564px;letter-spacing:0.119px;">RoHS Compliant</div>
<div class="t" style="left:365.35px;top:564px;letter-spacing:-0.850px;">Yes</div>
<div class="t" style="left:244.53px;top:584px;letter-spacing:-0.007px;">Transistor Type</div>
<div class="t" style="left:365.32px;top:584px;letter-spacing:-0.146px;">2 NPN (Dual)</div>
<div class="abs" style="left:497px;top:439px;width:249px;height:207px;background:#000;border:1px solid #262626"></div>
<svg style="left:498px;top:440px" width="247" height="205" viewBox="498 440 247 205" shape-rendering="crispEdges">
<defs><pattern id="hx" x="0" y="0" width="8" height="8" patternUnits="userSpaceOnUse"><g fill="#ff00ff" shape-rendering="crispEdges"><rect x="0" y="1" width="1" height="1"/><rect x="0" y="6" width="1" height="1"/><rect x="1" y="0" width="1" height="1"/><rect x="1" y="7" width="1" height="1"/><rect x="2" y="0" width="1" height="1"/><rect x="2" y="7" width="1" height="1"/><rect x="3" y="1" width="1" height="1"/><rect x="3" y="6" width="1" height="1"/><rect x="4" y="2" width="1" height="1"/><rect x="4" y="5" width="1" height="1"/><rect x="5" y="3" width="1" height="1"/><rect x="5" y="4" width="1" height="1"/><rect x="6" y="3" width="1" height="1"/><rect x="6" y="4" width="1" height="1"/><rect x="7" y="2" width="1" height="1"/><rect x="7" y="5" width="1" height="1"/></g></pattern><clipPath id="pc"><rect x="498" y="440" width="247" height="205"/></clipPath></defs>
<g clip-path="url(#pc)">
<circle cx="560.5" cy="470.5" r="13.6" fill="#ffff00"/>
<rect x="523.6" y="473.6" width="197" height="153.8" fill="none" stroke="#008000" stroke-width="3" stroke-linejoin="round" shape-rendering="auto"/>
<rect x="531" y="496" width="58" height="34" fill="#800080"/>
<rect x="654" y="496" width="58" height="34" fill="#800080"/>
<rect x="537" y="502" width="46" height="22" fill="#ff0000"/>
<rect x="660" y="502" width="46" height="22" fill="#ff0000"/>
<rect x="531" y="533" width="58" height="34" fill="#800080"/>
<rect x="654" y="533" width="58" height="34" fill="#800080"/>
<rect x="537" y="539" width="46" height="22" fill="#ff0000"/>
<rect x="660" y="539" width="46" height="22" fill="#ff0000"/>
<rect x="531" y="570" width="58" height="34" fill="#800080"/>
<rect x="654" y="570" width="58" height="34" fill="#800080"/>
<rect x="537" y="576" width="46" height="22" fill="#ff0000"/>
<rect x="660" y="576" width="46" height="22" fill="#ff0000"/>
<rect x="603" y="484" width="38" height="2" fill="#ffff00"/>
<rect x="602" y="615" width="40" height="2.6" fill="#ffff00"/>
<rect x="600" y="491" width="9" height="118.5" fill="#ffff00"/>
<rect x="635.3" y="491" width="8.9" height="118.5" fill="#ffff00"/>
<rect x="600" y="491" width="44" height="2.3" fill="#ffff00"/>
<path d="M621 523 V578 M594 550 H650" stroke="#008000" stroke-width="5.6" stroke-linecap="round" fill="none" shape-rendering="auto"/>
<rect x="559" y="488" width="125.5" height="124.5" fill="url(#hx)"/>
<text x="559" y="515" font-family="Liberation Sans, sans-serif" font-size="6" fill="#ffb0c0" shape-rendering="auto">1</text>
<text x="559" y="552" font-family="Liberation Sans, sans-serif" font-size="6" fill="#ffb0c0" shape-rendering="auto">2</text>
<text x="559" y="589" font-family="Liberation Sans, sans-serif" font-size="6" fill="#ffb0c0" shape-rendering="auto">3</text>
<text x="682" y="515" font-family="Liberation Sans, sans-serif" font-size="6" fill="#ffb0c0" shape-rendering="auto">6</text>
<text x="682" y="552" font-family="Liberation Sans, sans-serif" font-size="6" fill="#ffb0c0" shape-rendering="auto">5</text>
<text x="682" y="589" font-family="Liberation Sans, sans-serif" font-size="6" fill="#ffb0c0" shape-rendering="auto">4</text>
<path fill-rule="evenodd" fill="#ff00ff" shape-rendering="auto" d="M584.5 485 H658.5 L663 489.5 V611.5 L659 615.5 H584 L580 611.5 V489.5 Z M586 491 V609.3 H657 V491 Z"/>
</g></svg>
<div class="abs" style="left:506.4px;top:612.4px;width:24px;height:24px;background:#f0f0f0;border:1px solid #cfcfcf"></div>
<div class="t" style="left:511.05px;top:618.3px;letter-spacing:-0.225px;color:#1a1a1a">3D</div>
<div class="abs" style="left:756px;top:439px;width:249px;height:207px;background:#3a3a3a;border:1px solid #262626"></div>
<div class="abs" style="left:757px;top:440px;width:247px;height:185px;background:#ffffff"></div>
<div class="abs" style="left:761px;top:444px;width:241px;height:180px;background:#e6e6e6"></div>
<div class="abs" style="left:762px;top:445px;width:238px;height:177px;background:#fffcf7"></div>
<svg style="left:757px;top:440px" width="247" height="185" viewBox="757 440 247 185">
<g stroke="#000" stroke-width="2.2" fill="none" shape-rendering="crispEdges">
<path d="M839 471 V513"/><path d="M839 554 V597"/><path d="M777 534 H817"/>
</g>
<g stroke="#0000ff" stroke-width="2.2" fill="none">
<path d="M817.9 513 V555" shape-rendering="crispEdges"/>
<path d="M818.8 522.4 L833 516"/><path d="M818.8 544.6 L839.7 554.4"/>
</g>
<path d="M829 513.4 L840 513.4 L835.4 521.8 Z" fill="#0000ff"/>
<g font-family="Liberation Sans, sans-serif" font-size="18" fill="#000">
<text x="792.3" y="529.3">2</text>
<path d="M821 489.9 H835.2" stroke="#000" stroke-width="2" fill="none"/><path d="M821.6 490 L825.4 493.8" stroke="#000" stroke-width="1.8" stroke-linecap="round" fill="none"/>
<text transform="translate(834.5,580) rotate(-90)" x="0" y="0">6</text>
</g>
</svg>
<div class="abs" style="left:757px;top:623px;width:51px;height:22px;background:#ffffff"></div>
<div class="abs" style="left:808px;top:625px;width:43px;height:18px;background:#f0f0f0"></div>
<div class="t" style="left:845.53px;top:510.5px;letter-spacing:-0.850px;color:#000080;font-family:'Liberation Serif',serif;font-size:19px;line-height:22px;height:22px">*A</div>
<div class="abs" style="left:840px;top:530px;width:160px;height:26px;overflow:hidden">
<div class="t" style="left:5.63px;top:2.3px;letter-spacing:-0.129px;color:#000080;font-family:'Liberation Serif',serif;font-size:19px;line-height:22px;height:22px">MBT3904DW1T1G</div>
</div>
<div class="t" style="left:768.35px;top:628.7px;letter-spacing:-0.300px;color:#1a1a1a">Part A</div>
<div class="t" style="left:814.95px;top:626.9px;letter-spacing:-0.478px;color:#1a1a1a">Part B</div>
<div class="tab" style="left:247px;top:646px;width:53px;height:18px;background:#525252"></div>
<div class="t" style="left:254.05px;top:648px;letter-spacing:-0.132px;color:#fff">Preview</div>
<div class="tab" style="left:299px;top:646px;width:56px;height:18px"></div>
<div class="t" style="left:306.25px;top:648px;letter-spacing:-0.173px;">Lifecycle</div>
<div class="tab" style="left:354px;top:646px;width:77px;height:18px"></div>
<div class="t" style="left:361.25px;top:648px;letter-spacing:-0.095px;">Part Choices</div>
<div class="tab" style="left:430px;top:646px;width:77px;height:18px"></div>
<div class="t" style="left:437.50px;top:648px;letter-spacing:0.259px;">Where-used</div>
<div class="tab" style="left:506px;top:646px;width:47px;height:18px"></div>
<div class="t" style="left:513.54px;top:648px;letter-spacing:0.598px;">Origin</div>
<div class="tab" style="left:552px;top:646px;width:70px;height:18px"></div>
<div class="t" style="left:559.15px;top:648px;letter-spacing:0.056px;">Data Sheet</div>
</body></html>
